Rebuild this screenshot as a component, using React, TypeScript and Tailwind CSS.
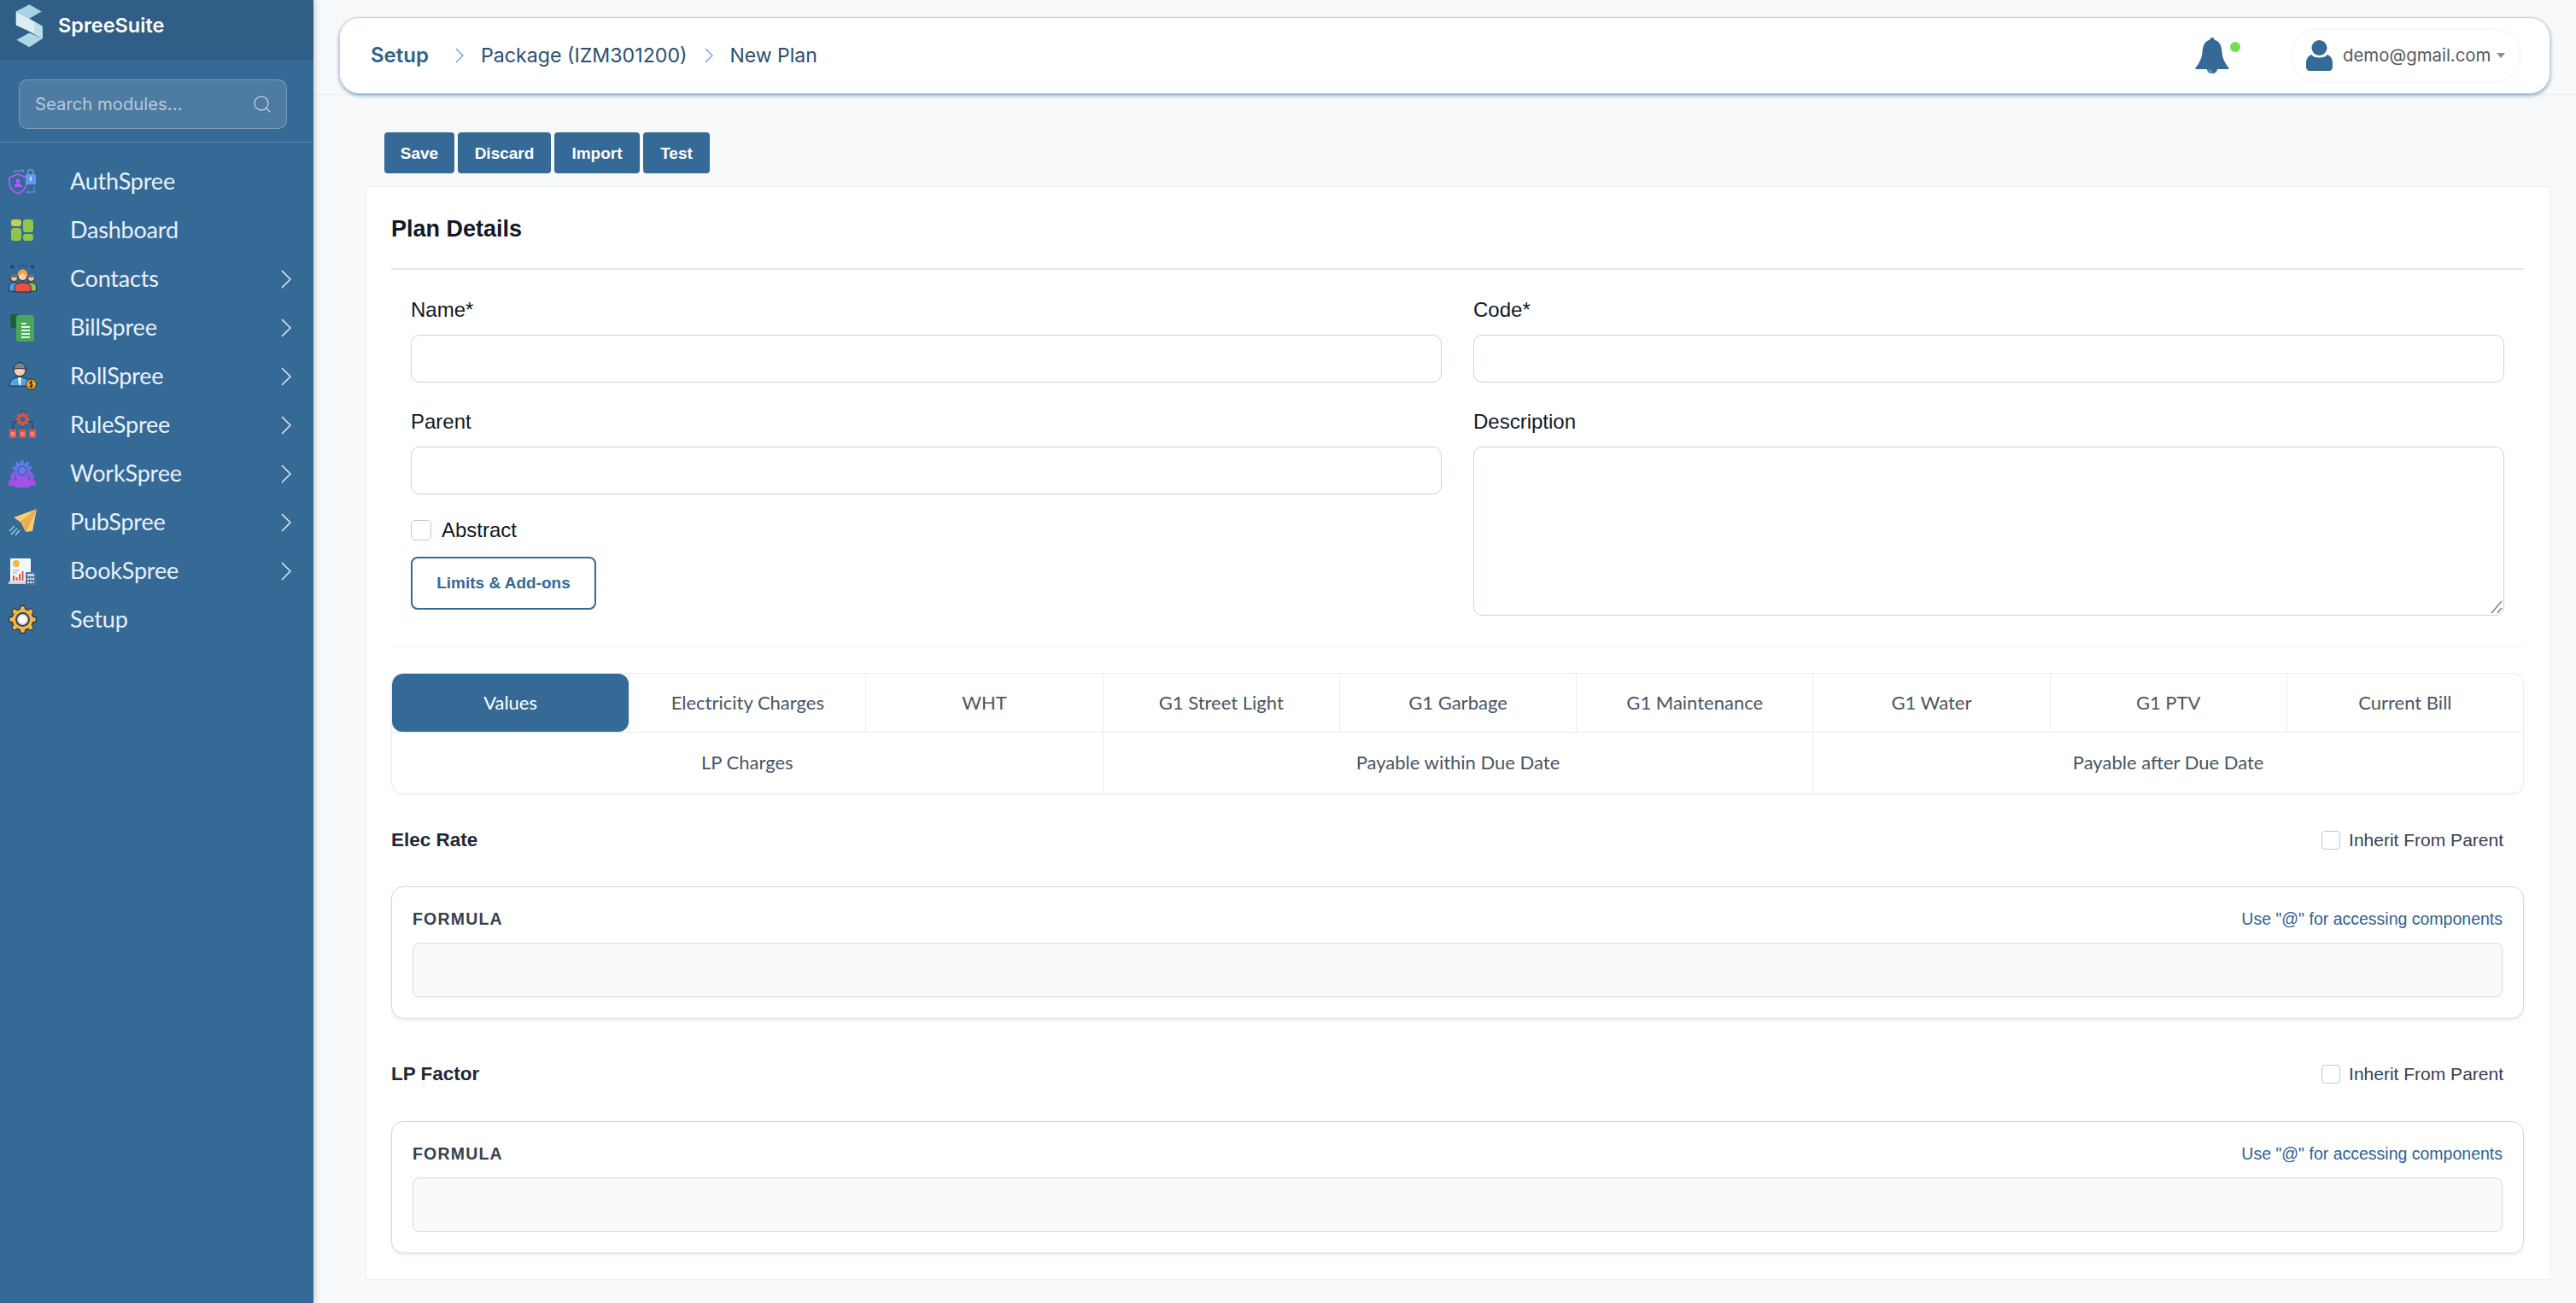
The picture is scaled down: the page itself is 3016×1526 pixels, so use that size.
import React from "react";
import { Search } from "lucide-react";

// polygon points for a toothed wheel, used by the module icons
const gear = (cx: number, cy: number, inner: number, outer: number, n: number) => {
  const pts: string[] = [];
  for (let i = 0; i < n; i++) {
    const step = (Math.PI * 2) / n;
    const a = i * step - Math.PI / 2;
    [
      [inner, a - step * 0.32],
      [outer, a - step * 0.2],
      [outer, a + step * 0.2],
      [inner, a + step * 0.32],
    ].forEach(([r, t]) => pts.push(`${(cx + r * Math.cos(t)).toFixed(2)},${(cy + r * Math.sin(t)).toFixed(2)}`));
  }
  return pts.join(" ");
};

const LogoMark = () => (
  <svg width="34" height="53" viewBox="48 12 102 158">
    <polygon points="53,40 100,15 143,40 100,65" fill="#a8d4e2" />
    <polygon points="53,40 100,65 146,92 146,135 100,110 53,88" fill="#dbecf3" />
    <polygon points="146,92 146,135 118,120 118,76" fill="#bcdde8" />
    <polygon points="146,135 100,165 55,140 100,115" fill="#aed8e5" />
  </svg>
);

const AuthIcon = () => (
  <svg width="32" height="32" viewBox="0 0 32 32" fill="none">
    <path d="M1 11 L11 7 L21 11 V17 C21 24 15 28 11 30 C7 28 1 24 1 17 Z" stroke="#b35cf5" strokeWidth="1.800" />
    <circle cx="11" cy="15" r="2.400" fill="#b35cf5" />
    <path d="M6.500 22 c0-3 2-4 4.500-4 s4.500 1 4.500 4z" fill="#b35cf5" />
    <path d="M23 7 v-2.500 a3 3 0 0 1 6 0 V7" stroke="#5b9bf5" strokeWidth="1.600" />
    <rect x="20" y="7" width="12" height="12" rx="1.500" fill="#5b9bf5" />
    <rect x="25" y="10" width="2" height="5" fill="#c7dcfa" />
    <path d="M7 6 V3 H18 M16 1 l2 2 -2 2 M30 22 V28 H21 M23 26 l-2 2 2 2" stroke="#8a8ff5" strokeWidth="1" />
  </svg>
);

const DashIcon = () => (
  <svg width="32" height="32" viewBox="0 0 32 32">
    <rect x="3" y="3" width="12" height="8" rx="3" fill="#c5d04a" />
    <rect x="3" y="13" width="12" height="15" rx="3.500" fill="#8fc74a" />
    <rect x="17" y="3" width="12" height="15" rx="3.500" fill="#8fc74a" />
    <rect x="17" y="20" width="12" height="8" rx="3" fill="#8fc74a" />
  </svg>
);

const ContactsIcon = () => (
  <svg width="33" height="33" viewBox="0 0 33 33">
    <circle cx="4.500" cy="2.500" r="1.500" fill="none" stroke="#111827" strokeWidth="0.800" />
    <circle cx="28" cy="2.500" r="1.500" fill="none" stroke="#111827" strokeWidth="0.800" />
    <path d="M16.500 0 v2 M12 1 l1 1.500 M21 1 l-1 1.500" stroke="#111827" strokeWidth="0.800" />
    <path d="M0.500 31 v-5 c0-3 3-5 6-5 s5 2 5 5 v5z" fill="#4da0dc" stroke="#111827" strokeWidth="0.800" />
    <path d="M21.500 31 v-5 c0-3 2-5 5-5 s6 2 6 5 v5z" fill="#8cc152" stroke="#111827" strokeWidth="0.800" />
    <circle cx="6.500" cy="15.500" r="4" fill="#f3c9a5" stroke="#111827" strokeWidth="0.800" />
    <path d="M2.500 15 a4 4 0 0 1 8 0z" fill="#6b7280" />
    <circle cx="26.500" cy="15.500" r="4" fill="#f3c9a5" stroke="#111827" strokeWidth="0.800" />
    <path d="M22.500 15 a4 4 0 0 1 8 0z" fill="#6b7280" />
    <path d="M7 32 v-6 c0-3 4-5 9.500-5 s9.500 2 9.500 5 v6z" fill="#e8503f" stroke="#111827" strokeWidth="0.800" />
    <circle cx="16.500" cy="13" r="5.500" fill="#f8d1ab" stroke="#111827" strokeWidth="0.800" />
    <path d="M10.500 13 c0-5 3-7.500 6-7.500 s6 2.500 6 7.500 c-3-.5-5-2-6-3.500 c-1 1.500-3 3-6 3.500z" fill="#f0a63c" />
  </svg>
);

const BillIcon = () => (
  <svg width="32" height="32" viewBox="0 0 32 32">
    <path d="M2 3 a4 4 0 0 1 4-4 H12 V16 H5 a3 3 0 0 1-3-3z" fill="#1f5e3a" />
    <rect x="9" y="1" width="21" height="31" rx="3" fill="#47a75a" />
    <path d="M15 11 h6 M15 15 h10 M15 19 h10 M15 23 h10 M15 27 h10" stroke="#e6f6e9" strokeWidth="2" />
  </svg>
);

const RollIcon = () => (
  <svg width="33" height="33" viewBox="0 0 33 33">
    <path d="M1 28 c0-6 4-9 9-10 h6 c5 1 8 3 8 10 z" fill="#4da8dc" stroke="#111827" strokeWidth="0.800" />
    <path d="M11 18 h4 l-1 8 -1 2 -1-2z" fill="#f8fafc" />
    <circle cx="13" cy="9.500" r="7" fill="#f6cdb0" stroke="#111827" strokeWidth="0.800" />
    <path d="M6 9 c0-5 3-8.500 7-8.500 s7 3.500 7 8.500 c-3-2-11-2-14 0z" fill="#7b8188" stroke="#111827" strokeWidth="0.800" />
    <circle cx="26.500" cy="26" r="6" fill="#f5a623" stroke="#111827" strokeWidth="0.800" />
    <path d="M28.500 23.500 c-1-1-4-1-4 .8 s4 1 4 3 -3 1.500-4.500 .5 M26.500 21.500 v9" stroke="#111827" strokeWidth="1" fill="none" />
  </svg>
);

const RuleIcon = () => (
  <svg width="33" height="33" viewBox="0 0 33 33">
    <path d="M13 0.500 h7" stroke="#374151" strokeWidth="1" />
    <polygon points={gear(16.5, 10, 6, 8, 8)} fill="#e8503f" />
    <circle cx="16.500" cy="10" r="3.200" fill="#356996" />
    <path d="M5 21 V15 a2 2 0 0 1 2-2 h2 M28 21 V15 a2 2 0 0 0-2-2 h-2 M16.500 18 V21" fill="none" stroke="#1f2937" strokeWidth="0.800" />
    {[1, 12.5, 24].map((x) => (
      <g key={x}>
        <rect x={x} y="22" width="8" height="10" fill="#e8503f" />
        <path d={`M${x + 1.5} 26 h5 M${x + 1.5} 28.500 h5`} stroke="#fbd5cf" strokeWidth="0.900" />
      </g>
    ))}
  </svg>
);

const WorkIcon = () => (
  <svg width="32" height="32" viewBox="0 0 32 32">
    <defs>
      <linearGradient id="workGrad" x1="0" y1="0" x2="0" y2="1">
        <stop offset="0" stopColor="#4f8be8" />
        <stop offset="1" stopColor="#a24de8" />
      </linearGradient>
    </defs>
    <polygon points={gear(16, 12, 9, 12, 10)} fill="url(#workGrad)" />
    <circle cx="16" cy="12" r="6" fill="#4a5fc9" />
    <circle cx="16" cy="12" r="4" fill="#6a7ce6" />
    <circle cx="5" cy="19" r="3" fill="#9a55e8" />
    <circle cx="27" cy="19" r="3" fill="#9a55e8" />
    <path d="M0 30 v-3 c0-3 2-5 5-5 s5 2 5 5 v3z M22 30 v-3 c0-3 2-5 5-5 s5 2 5 5 v3z" fill="#a24de8" />
    <path d="M8 32 v-6 c0-4 4-6 8-6 s8 2 8 6 v6z" fill="#a552e8" />
  </svg>
);

const PubIcon = () => (
  <svg width="33" height="32" viewBox="0 0 33 32">
    <polygon points="33,0 6,10 14,15.500" fill="#f8cc72" />
    <polygon points="33,0 14,15.500 20,27" fill="#efb04c" />
    <polygon points="33,0 20,27 28,26" fill="#f8cc72" />
    <path d="M7 20 L1 26 M10 23 L3 30 M13 25 L8 31" stroke="#7fd4d8" strokeWidth="1.600" />
  </svg>
);

const BookIcon = () => (
  <svg width="32" height="32" viewBox="0 0 32 32">
    <rect x="2" y="1" width="24" height="29" rx="1" fill="#f3f6fb" />
    <rect x="0" y="28" width="27" height="3" fill="#cbd5e1" />
    <circle cx="9" cy="7" r="4" fill="#f5b83d" />
    <path d="M5 15 h8 M5 18 h5" stroke="#9aa5b4" strokeWidth="1" />
    <path d="M5 21h2v6H5z M8.500 23h2v4h-2z M12 19h2v8h-2z M15.500 16h2v11h-2z" fill="#e8503f" />
    <rect x="20" y="17" width="12" height="15" rx="1" fill="#5273a8" />
    <rect x="22" y="19" width="8" height="3" fill="#c8d6ec" />
    <path d="M22 24h2v2h-2z M25 24h2v2h-2z M28 24h2v2h-2z M22 28h2v2h-2z M25 28h2v2h-2z" fill="#eef2f8" />
    <path d="M28 28h2v2h-2z" fill="#f5b83d" />
  </svg>
);

const SetupIcon = () => (
  <svg width="33" height="33" viewBox="0 0 33 33">
    <polygon points={gear(16.5, 16.5, 12.5, 16, 8)} fill="#f4b548" stroke="#111827" strokeWidth="1" />
    <circle cx="16.500" cy="16.500" r="8.500" fill="#374151" />
    <circle cx="16.500" cy="16.500" r="6.500" fill="#d1d5db" />
    <circle cx="16.500" cy="16.500" r="4.500" fill="#ffffff" />
  </svg>
);

const menu = [
  { label: "AuthSpree", icon: <AuthIcon />, arrow: false },
  { label: "Dashboard", icon: <DashIcon />, arrow: false },
  { label: "Contacts", icon: <ContactsIcon />, arrow: true },
  { label: "BillSpree", icon: <BillIcon />, arrow: true },
  { label: "RollSpree", icon: <RollIcon />, arrow: true },
  { label: "RuleSpree", icon: <RuleIcon />, arrow: true },
  { label: "WorkSpree", icon: <WorkIcon />, arrow: true },
  { label: "PubSpree", icon: <PubIcon />, arrow: true },
  { label: "BookSpree", icon: <BookIcon />, arrow: true },
  { label: "Setup", icon: <SetupIcon />, arrow: false },
];

const tabsTop = [
  "Values",
  "Electricity Charges",
  "WHT",
  "G1 Street Light",
  "G1 Garbage",
  "G1 Maintenance",
  "G1 Water",
  "G1 PTV",
  "Current Bill",
];
const tabsBottom = ["LP Charges", "Payable within Due Date", "Payable after Due Date"];

const Crumb = () => (
  <svg width="10" height="18" viewBox="0 0 10 18" fill="none">
    <polyline points="1,1 9,9 1,17" stroke="#6f97d6" strokeWidth="1.200" />
  </svg>
);

const Sidebar = () => (
  <aside className="w-[367px] shrink-0 bg-[#356996] shadow-[2px_0_6px_rgba(0,0,0,0.18)] z-10 flex flex-col">
    <div className="h-[70px] bg-[#315e87] flex items-center pl-[17px] pb-[10px]">
      <LogoMark />
      <span className="ml-[17px] font-['Inter',sans-serif] font-semibold text-[23.500px] text-white">SpreeSuite</span>
    </div>
    <div className="pl-[22px] pr-[31px] pt-[23px] pb-[15px] border-b border-white/20">
      <div className="h-[58px] rounded-[10px] border border-white/25 bg-white/12 flex items-center pl-[18px] pr-[16px]">
        <input
          className="flex-1 min-w-0 bg-transparent outline-none font-['Inter',sans-serif] text-[20.300px] text-white placeholder:text-white/60"
          placeholder="Search modules..."
        />
        <Search className="w-[24px] h-[24px] text-white/70" strokeWidth={1.25} />
      </div>
    </div>
    <nav className="pt-[17px] flex flex-col">
      {menu.map((m) => (
        <div key={m.label} className="h-[57px] flex items-center pl-[9px] pr-[26px]">
          <span className="w-[34px] flex justify-center">{m.icon}</span>
          <span className="ml-[39px] flex-1 font-['Lato',sans-serif] text-[27px] tracking-[-0.2px] text-[#e8f1fa]">{m.label}</span>
          {m.arrow && (
            <svg width="12" height="22" viewBox="0 0 12 22" fill="none">
              <polyline points="1,1 11,11 1,21" stroke="#e3edf7" strokeWidth="1.500" />
            </svg>
          )}
        </div>
      ))}
    </nav>
  </aside>
);

const Topbar = () => (
  <header className="h-[111px] pt-[20px] pl-[30px] pr-[30px] border-b border-[#e9ecef]">
    <div className="h-[90px] rounded-[24px] bg-white border border-[#c3d3e3] shadow-[0_2px_4px_rgba(53,105,150,0.55)] flex items-center pl-[36px] pr-[35px] font-['Inter',sans-serif]">
      <span className="text-[24px] font-semibold text-[#2f6388]">Setup</span>
      <span className="ml-[31px]">
        <Crumb />
      </span>
      <span className="ml-[20px] text-[23.200px] text-[#2c4f6e]">Package (IZM301200)</span>
      <span className="ml-[20px]">
        <Crumb />
      </span>
      <span className="ml-[20px] text-[23px] text-[#2c4f6e]">New Plan</span>
      <span className="ml-auto relative w-[50px] h-[44px]">
        <svg width="40" height="43" viewBox="0 0 40 43" className="mt-[1px]">
          <path
            d="M20 0c1.600 0 2.500 1.200 2.600 2.600 C29 4.500 31 10 31.500 17 c.4 6 2.500 12 8 18.500 .5 .8 0 1.500-.8 1.500 H26 c0 3-2.700 5-6 5 s-6-2-6-5 H1.300 c-.8 0-1.300-.7-.8-1.500 C6 29 8.100 23 8.500 17 9 10 11 4.500 17.400 2.600 17.500 1.200 18.400 0 20 0z"
            fill="#356996"
          />
          <path d="M16.500 37.500 c.5 2 2 3 3.500 3" stroke="#fff" strokeWidth="0.800" fill="none" />
        </svg>
        <span className="absolute left-[41px] top-[6px] w-[12px] h-[12px] rounded-full bg-[#6ee04e]" />
      </span>
      <div className="ml-[63px] h-[60px] w-[267px] rounded-full bg-white shadow-[0_0_4px_rgba(0,0,0,0.08)] flex items-center pl-[17px]">
        <svg width="31" height="36" viewBox="0 0 31 36">
          <circle cx="15.500" cy="9" r="9" fill="#356996" />
          <path
            d="M0 27 c0-5 2-8 6-10 c2 2.500 5.500 3.500 9.500 3.500 s7.500-1 9.500-3.500 c4 2 6 5 6 10 v5 c0 2-2 4-4 4 H4 c-2 0-4-2-4-4z"
            fill="#356996"
          />
        </svg>
        <span className="ml-[12px] text-[20.400px] text-[#555b61]">demo@gmail.com</span>
        <span className="ml-[7px] w-0 h-0 border-x-[5px] border-x-transparent border-t-[6px] border-t-[#8a8f94]" />
      </div>
    </div>
  </header>
);

const fieldClass = "w-full rounded-[10px] border border-[#ccd3d9] bg-white outline-none";
const labelClass = "block h-[28px] leading-[28px] text-[24px] text-[#111827]";

const Formula = ({ gap }: { gap: string }) => (
  <div className={`${gap} h-[155px] rounded-[14px] border border-[#d5d8dd] bg-white shadow-[0_2px_4px_rgba(0,0,0,0.07)] px-[24px] pt-[25px]`}>
    <div className="h-[26px] flex items-center justify-between">
      <span className="text-[19.500px] font-bold tracking-[1.200px] text-[#374151]">FORMULA</span>
      <span className="text-[19.500px] text-[#2f6191]">Use "@" for accessing components</span>
    </div>
    <div className="mt-[14px] h-[64px] rounded-[8px] border border-[#d5d8dd] bg-[#f9fafc]" />
  </div>
);

const SectionHead = ({ title }: { title: string }) => (
  <div className="h-[36px] flex items-center justify-between pr-[24px]">
    <span className="text-[22.500px] font-bold text-[#1f2937]">{title}</span>
    <label className="flex items-center">
      <input type="checkbox" className="appearance-none w-[22px] h-[22px] rounded-[4px] border border-[#c4c7cc] bg-white" />
      <span className="ml-[10px] text-[21px] text-[#374151]">Inherit From Parent</span>
    </label>
  </div>
);

export default function App() {
  return (
    <div className="flex w-full h-[1526px] overflow-hidden bg-[#f8f9fa] font-['Liberation_Sans',sans-serif]">
      <Sidebar />
      <main className="flex-1 min-w-0">
        <Topbar />
        <div className="pl-[61px] pr-[30px] pt-[44px]">
          <div className="flex gap-[4px] ml-[22px]">
            {[
              { t: "Save", w: "w-[82px]" },
              { t: "Discard", w: "w-[109px]" },
              { t: "Import", w: "w-[100px]" },
              { t: "Test", w: "w-[78px]" },
            ].map((b) => (
              <button key={b.t} className={`${b.w} h-[48px] pt-[2px] rounded-[4px] bg-[#356996] text-white text-[19px] font-bold`}>
                {b.t}
              </button>
            ))}
          </div>
          <section className="mt-[15px] h-[1281px] bg-white border border-[#eceef0] pl-[29px] pr-[30px]">
            <div className="h-[97px] pt-[3px] border-b-2 border-[#e5e7eb] flex items-center">
              <h2 className="text-[27px] font-bold text-[#111827]">Plan Details</h2>
            </div>
            <div className="px-[23px] pt-[33px] h-[441px] border-b border-[#f1f2f4] grid grid-cols-2 gap-x-[37px] content-start">
              <div>
                <label className={labelClass}>Name*</label>
                <input className={`${fieldClass} mt-[15px] h-[56px]`} />
                <label className={`${labelClass} mt-[32px]`}>Parent</label>
                <input className={`${fieldClass} mt-[15px] h-[56px]`} />
                <div className="mt-[30px] flex items-center h-[24px]">
                  <input type="checkbox" className="appearance-none w-[24px] h-[24px] rounded-[5px] border border-[#c4c7cc] bg-white" />
                  <span className="ml-[12px] text-[24px] text-[#111827]">Abstract</span>
                </div>
                <button className="mt-[19px] w-[217px] h-[62px] rounded-[8px] border-2 border-[#356996] bg-white text-[19px] font-bold text-[#356996]">
                  Limits &amp; Add-ons
                </button>
              </div>
              <div>
                <label className={labelClass}>Code*</label>
                <input className={`${fieldClass} mt-[15px] h-[56px]`} />
                <label className={`${labelClass} mt-[32px]`}>Description</label>
                <div className="relative mt-[15px] h-[198px]">
                  <textarea className={`${fieldClass} h-full block resize-none`} />
                  <svg width="14" height="16" viewBox="0 0 14 16" fill="none" className="absolute right-[2px] bottom-[2px]">
                    <path d="M1 15 L13 1 M8 15 L13 9" stroke="#6b7280" strokeWidth="1.200" />
                  </svg>
                </div>
              </div>
            </div>
            <div className="mt-[31px] h-[142px] rounded-[14px] border border-[#e9ebee] shadow-[0_1px_2px_rgba(0,0,0,0.06)] overflow-hidden font-['Lato',sans-serif] text-[22px] text-[#4b5563]">
              <div className="grid grid-cols-9 h-[69px] border-b border-[#e9ebee]">
                {tabsTop.map((t, i) => (
                  <div
                    key={t}
                    className={
                      i === 0
                        ? "flex items-center justify-center pb-[2px] rounded-[12px] bg-[#356996] text-white"
                        : "flex items-center justify-center pb-[2px] border-l border-[#e9ebee]"
                    }
                  >
                    {t}
                  </div>
                ))}
              </div>
              <div className="grid grid-cols-3 h-[71px]">
                {tabsBottom.map((t, i) => (
                  <div
                    key={t}
                    className={i === 0 ? "flex items-center justify-center pb-[2px]" : "flex items-center justify-center pb-[2px] border-l border-[#e9ebee]"}
                  >
                    {t}
                  </div>
                ))}
              </div>
            </div>
            <div className="mt-[36px]">
              <SectionHead title="Elec Rate" />
              <Formula gap="mt-[36px]" />
            </div>
            <div className="mt-[47px]">
              <SectionHead title="LP Factor" />
              <Formula gap="mt-[37px]" />
            </div>
          </section>
        </div>
      </main>
    </div>
  );
}
